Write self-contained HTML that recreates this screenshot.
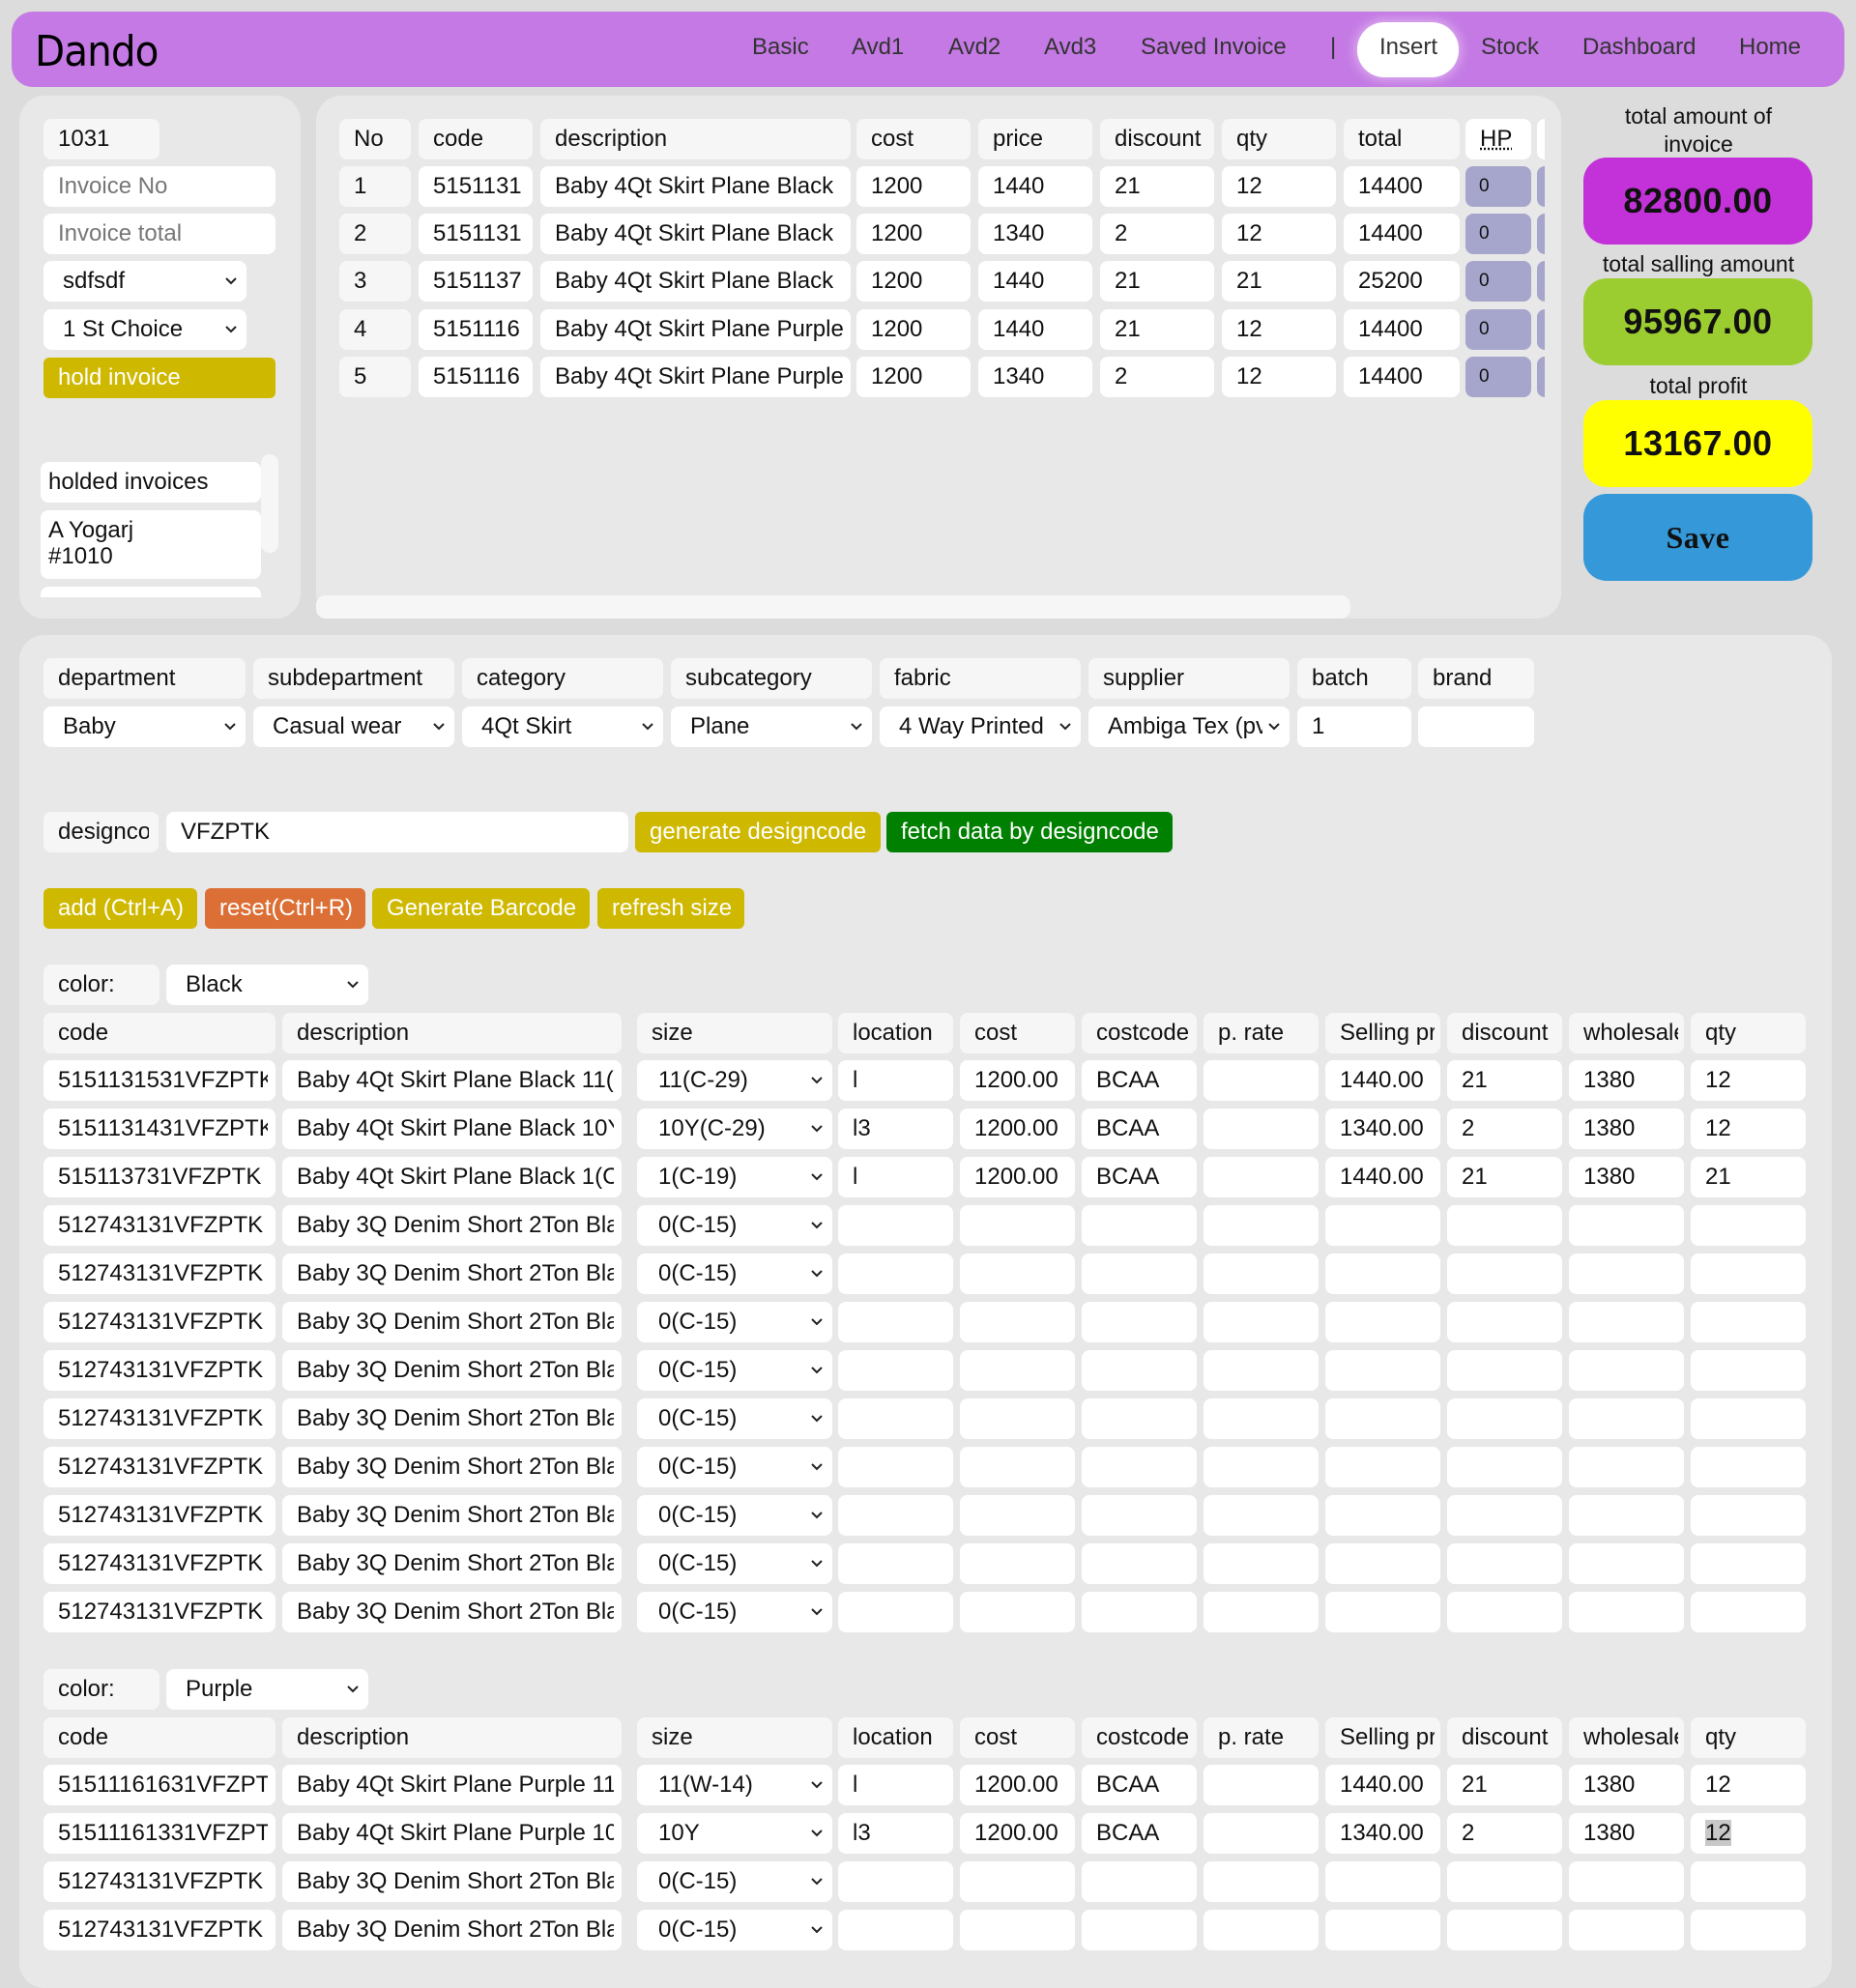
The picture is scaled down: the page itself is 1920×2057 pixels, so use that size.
<!DOCTYPE html>
<html><head><meta charset="utf-8"><style>
*{box-sizing:border-box;margin:0;padding:0}
body{width:1920px;height:2014px;background:#dcdcdc;font-family:"Liberation Sans",Arial,sans-serif;color:#111;position:relative;overflow:hidden;font-size:24px}
.a{position:absolute}
.c{position:absolute;height:42px;line-height:42px;border-radius:8px;background:#fff;padding-left:15px;white-space:nowrap;overflow:hidden;font-size:24px}
.h{background:#f6f6f6}
.sel svg{position:absolute;right:10px;top:17px}
.sel{padding-right:28px}
.btn{position:absolute;height:42px;line-height:42px;border-radius:6px;color:#fff;padding-left:15px;white-space:nowrap;font-size:24px}
.y{background:#cfb800}
.nav{position:absolute;top:35px;font-size:24px;color:#333}
.box{position:absolute;left:1638px;width:237px;height:90px;border-radius:24px;text-align:center;line-height:90px;font-weight:bold;font-size:36px;letter-spacing:0.5px}
.lab{position:absolute;left:1620px;width:274px;text-align:center;font-size:23px;line-height:29px}
.r{position:absolute;left:0;width:1920px;height:42px}
.k1{left:45px;width:240px}.k2{left:292px;width:351px}.k3{left:659px;width:202px}.k4{left:867px;width:119px}
.k5{left:993px;width:119px}.k6{left:1119px;width:119px}.k7{left:1245px;width:119px}.k8{left:1371px;width:119px}
.k9{left:1497px;width:119px}.k10{left:1623px;width:119px}.k11{left:1749px;width:119px}
.k3{padding-left:22px}
.t{display:block;overflow:hidden}
</style></head><body>
<!-- header -->
<div class="a" style="left:12px;top:12px;width:1896px;height:78px;background:#c479e4;border-radius:22px"></div>
<div class="a" style="left:36px;top:28px;font-size:44px;font-family:'DejaVu Sans',sans-serif;font-weight:normal;letter-spacing:-1px;color:#000;transform:scaleX(0.92);transform-origin:left">Dando</div>
<div class="nav" style="left:778px">Basic</div>
<div class="nav" style="left:881px">Avd1</div>
<div class="nav" style="left:981px">Avd2</div>
<div class="nav" style="left:1080px">Avd3</div>
<div class="nav" style="left:1180px">Saved Invoice</div>
<div class="nav" style="left:1376px">|</div>
<div class="a" style="left:1404px;top:23px;width:105px;height:57px;border-radius:28px;background:#fff;box-shadow:0 0 14px rgba(255,255,255,.6)"></div>
<div class="nav" style="left:1427px">Insert</div>
<div class="nav" style="left:1532px">Stock</div>
<div class="nav" style="left:1637px">Dashboard</div>
<div class="nav" style="left:1799px">Home</div>

<!-- left panel -->
<div class="a" style="left:20px;top:99px;width:291px;height:541px;background:#e8e8e8;border-radius:26px"></div>
<div class="c h" style="left:45px;top:123px;width:120px">1031</div>
<div class="c" style="left:45px;top:172px;width:240px;color:#777">Invoice No</div>
<div class="c" style="left:45px;top:221px;width:240px;color:#777">Invoice total</div>
<div class="c sel" style="left:45px;top:270px;width:210px;padding-left:20px">sdfsdf<svg width="12" height="8"><path d="M1 1l5 5 5-5" stroke="#222" stroke-width="2" fill="none"/></svg></div>
<div class="c sel" style="left:45px;top:320px;width:210px;padding-left:20px">1 St Choice<svg width="12" height="8"><path d="M1 1l5 5 5-5" stroke="#222" stroke-width="2" fill="none"/></svg></div>
<div class="btn y" style="left:45px;top:370px;width:240px">hold invoice</div>
<div class="c" style="left:42px;top:478px;width:228px;padding-left:8px">holded invoices</div>
<div class="c" style="left:42px;top:528px;width:228px;height:71px;line-height:27px;padding:7px 8px;white-space:normal">A Yogarj<br>#1010</div>
<div class="a" style="left:42px;top:607px;width:228px;height:11px;background:#fff;border-radius:8px 8px 0 0"></div>
<div class="a" style="left:270px;top:470px;width:18px;height:102px;background:#f6f6f6;border-radius:9px"></div>

<!-- middle panel -->
<div class="a" style="left:327px;top:99px;width:1288px;height:541px;background:#e8e8e8;border-radius:26px"></div>
<div class="a" style="left:327px;top:616px;width:1070px;height:24px;background:#f6f6f6;border-radius:10px"></div>
<div class="r" style="top:123px">
<div class="c h" style="left:351px;width:74px">No</div><div class="c h" style="left:433px;width:118px">code</div><div class="c h" style="left:559px;width:321px">description</div><div class="c h" style="left:886px;width:118px">cost</div><div class="c h" style="left:1012px;width:118px">price</div><div class="c h" style="left:1138px;width:118px">discount</div><div class="c h" style="left:1264px;width:118px">qty</div><div class="c h" style="left:1390px;width:120px">total</div><div class="c" style="left:1516px;width:68px;text-decoration:underline dotted">HP</div><div class="c" style="left:1590px;width:8px;padding:0;border-radius:8px 0 0 8px"></div>
</div>
<div class="r" style="top:172px"><div class="c h" style="left:351px;width:74px">1</div><div class="c" style="left:433px;width:118px">5151131</div><div class="c" style="left:559px;width:321px">Baby 4Qt Skirt Plane Black</div><div class="c" style="left:886px;width:118px">1200</div><div class="c" style="left:1012px;width:118px">1440</div><div class="c" style="left:1138px;width:118px">21</div><div class="c" style="left:1264px;width:118px">12</div><div class="c" style="left:1390px;width:120px">14400</div><div class="c" style="left:1516px;width:68px;background:#a6a6cc;font-size:19px;padding-left:14px">0</div><div class="c" style="left:1590px;width:8px;padding:0;background:#a6a6cc;border-radius:8px 0 0 8px"></div></div>
<div class="r" style="top:221px"><div class="c h" style="left:351px;width:74px">2</div><div class="c" style="left:433px;width:118px">5151131</div><div class="c" style="left:559px;width:321px">Baby 4Qt Skirt Plane Black</div><div class="c" style="left:886px;width:118px">1200</div><div class="c" style="left:1012px;width:118px">1340</div><div class="c" style="left:1138px;width:118px">2</div><div class="c" style="left:1264px;width:118px">12</div><div class="c" style="left:1390px;width:120px">14400</div><div class="c" style="left:1516px;width:68px;background:#a6a6cc;font-size:19px;padding-left:14px">0</div><div class="c" style="left:1590px;width:8px;padding:0;background:#a6a6cc;border-radius:8px 0 0 8px"></div></div>
<div class="r" style="top:270px"><div class="c h" style="left:351px;width:74px">3</div><div class="c" style="left:433px;width:118px">5151137</div><div class="c" style="left:559px;width:321px">Baby 4Qt Skirt Plane Black</div><div class="c" style="left:886px;width:118px">1200</div><div class="c" style="left:1012px;width:118px">1440</div><div class="c" style="left:1138px;width:118px">21</div><div class="c" style="left:1264px;width:118px">21</div><div class="c" style="left:1390px;width:120px">25200</div><div class="c" style="left:1516px;width:68px;background:#a6a6cc;font-size:19px;padding-left:14px">0</div><div class="c" style="left:1590px;width:8px;padding:0;background:#a6a6cc;border-radius:8px 0 0 8px"></div></div>
<div class="r" style="top:320px"><div class="c h" style="left:351px;width:74px">4</div><div class="c" style="left:433px;width:118px">5151116</div><div class="c" style="left:559px;width:321px">Baby 4Qt Skirt Plane Purple</div><div class="c" style="left:886px;width:118px">1200</div><div class="c" style="left:1012px;width:118px">1440</div><div class="c" style="left:1138px;width:118px">21</div><div class="c" style="left:1264px;width:118px">12</div><div class="c" style="left:1390px;width:120px">14400</div><div class="c" style="left:1516px;width:68px;background:#a6a6cc;font-size:19px;padding-left:14px">0</div><div class="c" style="left:1590px;width:8px;padding:0;background:#a6a6cc;border-radius:8px 0 0 8px"></div></div>
<div class="r" style="top:369px"><div class="c h" style="left:351px;width:74px">5</div><div class="c" style="left:433px;width:118px">5151116</div><div class="c" style="left:559px;width:321px">Baby 4Qt Skirt Plane Purple</div><div class="c" style="left:886px;width:118px">1200</div><div class="c" style="left:1012px;width:118px">1340</div><div class="c" style="left:1138px;width:118px">2</div><div class="c" style="left:1264px;width:118px">12</div><div class="c" style="left:1390px;width:120px">14400</div><div class="c" style="left:1516px;width:68px;background:#a6a6cc;font-size:19px;padding-left:14px">0</div><div class="c" style="left:1590px;width:8px;padding:0;background:#a6a6cc;border-radius:8px 0 0 8px"></div></div>

<!-- right -->
<div class="lab" style="top:106px">total amount of<br>invoice</div>
<div class="box" style="top:163px;background:#c332d9">82800.00</div>
<div class="lab" style="top:259px">total salling amount</div>
<div class="box" style="top:288px;background:#9ccd30">95967.00</div>
<div class="lab" style="top:385px">total profit</div>
<div class="box" style="top:414px;background:#ffff00">13167.00</div>
<div class="box" style="top:511px;background:#3498d9;font-family:'Liberation Serif',serif;font-size:32px">Save</div>

<!-- bottom panel -->
<div class="a" style="left:20px;top:657px;width:1875px;height:1400px;background:#e8e8e8;border-radius:26px"></div>
<div class="c h" style="left:45px;top:681px;width:209px">department</div>
<div class="c h" style="left:262px;top:681px;width:208px">subdepartment</div>
<div class="c h" style="left:478px;top:681px;width:208px">category</div>
<div class="c h" style="left:694px;top:681px;width:208px">subcategory</div>
<div class="c h" style="left:910px;top:681px;width:208px">fabric</div>
<div class="c h" style="left:1126px;top:681px;width:208px">supplier</div>
<div class="c h" style="left:1342px;top:681px;width:118px">batch</div>
<div class="c h" style="left:1467px;top:681px;width:120px">brand</div>
<div class="c sel" style="left:45px;top:731px;width:209px;padding-left:20px">Baby<svg width="12" height="8"><path d="M1 1l5 5 5-5" stroke="#222" stroke-width="2" fill="none"/></svg></div>
<div class="c sel" style="left:262px;top:731px;width:208px;padding-left:20px">Casual wear<svg width="12" height="8"><path d="M1 1l5 5 5-5" stroke="#222" stroke-width="2" fill="none"/></svg></div>
<div class="c sel" style="left:478px;top:731px;width:208px;padding-left:20px">4Qt Skirt<svg width="12" height="8"><path d="M1 1l5 5 5-5" stroke="#222" stroke-width="2" fill="none"/></svg></div>
<div class="c sel" style="left:694px;top:731px;width:208px;padding-left:20px">Plane<svg width="12" height="8"><path d="M1 1l5 5 5-5" stroke="#222" stroke-width="2" fill="none"/></svg></div>
<div class="c sel" style="left:910px;top:731px;width:208px;padding-left:20px"><span class="t">4 Way Printed</span><svg width="12" height="8"><path d="M1 1l5 5 5-5" stroke="#222" stroke-width="2" fill="none"/></svg></div>
<div class="c sel" style="left:1126px;top:731px;width:208px;padding-left:20px"><span class="t">Ambiga Tex (pvt)</span><svg width="12" height="8"><path d="M1 1l5 5 5-5" stroke="#222" stroke-width="2" fill="none"/></svg></div>
<div class="c" style="left:1342px;top:731px;width:118px">1</div>
<div class="c" style="left:1467px;top:731px;width:120px"></div>

<div class="c h" style="left:45px;top:840px;width:119px;padding-right:10px"><span class="t">designcode</span></div>
<div class="c" style="left:172px;top:840px;width:478px">VFZPTK</div>
<div class="btn y" style="left:657px;top:840px;width:254px">generate designcode</div>
<div class="btn" style="left:917px;top:840px;width:296px;background:#008000">fetch data by designcode</div>

<div class="btn y" style="left:45px;top:919px;width:159px">add (Ctrl+A)</div>
<div class="btn" style="left:212px;top:919px;width:166px;background:#dc6f35">reset(Ctrl+R)</div>
<div class="btn y" style="left:385px;top:919px;width:225px">Generate Barcode</div>
<div class="btn y" style="left:618px;top:919px;width:152px">refresh size</div>

<div class="c h" style="left:45px;top:998px;width:120px">color:</div>
<div class="c sel" style="left:172px;top:998px;width:209px;padding-left:20px">Black<svg width="12" height="8"><path d="M1 1l5 5 5-5" stroke="#222" stroke-width="2" fill="none"/></svg></div>

<div class="r" style="top:1048px"><div class="c h k1">code</div><div class="c h k2">description</div><div class="c h k3" style="padding-left:15px">size</div><div class="c h k4">location</div><div class="c h k5">cost</div><div class="c h k6" style="padding-right:6px"><span class="t">costcode</span></div><div class="c h k7">p. rate</div><div class="c h k8" style="padding-right:6px"><span class="t">Selling price</span></div><div class="c h k9">discount</div><div class="c h k10" style="padding-right:6px"><span class="t">wholesale</span></div><div class="c h k11">qty</div></div>

<div class="r" style="top:1097px"><div class="c k1" style="padding-right:8px"><span class="t">5151131531VFZPTK</span></div><div class="c k2" style="padding-right:8px"><span class="t">Baby 4Qt Skirt Plane Black 11(C-29)</span></div><div class="c sel k3">11(C-29)<svg width="12" height="8"><path d="M1 1l5 5 5-5" stroke="#222" stroke-width="2" fill="none"/></svg></div><div class="c k4">l</div><div class="c k5">1200.00</div><div class="c k6">BCAA</div><div class="c k7"></div><div class="c k8">1440.00</div><div class="c k9">21</div><div class="c k10">1380</div><div class="c k11">12</div></div>
<div class="r" style="top:1147px"><div class="c k1" style="padding-right:8px"><span class="t">5151131431VFZPTK</span></div><div class="c k2" style="padding-right:8px"><span class="t">Baby 4Qt Skirt Plane Black 10Y(C-29)</span></div><div class="c sel k3">10Y(C-29)<svg width="12" height="8"><path d="M1 1l5 5 5-5" stroke="#222" stroke-width="2" fill="none"/></svg></div><div class="c k4">l3</div><div class="c k5">1200.00</div><div class="c k6">BCAA</div><div class="c k7"></div><div class="c k8">1340.00</div><div class="c k9">2</div><div class="c k10">1380</div><div class="c k11">12</div></div>
<div class="r" style="top:1197px"><div class="c k1" style="padding-right:8px"><span class="t">515113731VFZPTK</span></div><div class="c k2" style="padding-right:8px"><span class="t">Baby 4Qt Skirt Plane Black 1(C-19)</span></div><div class="c sel k3">1(C-19)<svg width="12" height="8"><path d="M1 1l5 5 5-5" stroke="#222" stroke-width="2" fill="none"/></svg></div><div class="c k4">l</div><div class="c k5">1200.00</div><div class="c k6">BCAA</div><div class="c k7"></div><div class="c k8">1440.00</div><div class="c k9">21</div><div class="c k10">1380</div><div class="c k11">21</div></div>
<div class="r" style="top:1247px"><div class="c k1">512743131VFZPTK</div><div class="c k2" style="padding-right:8px"><span class="t">Baby 3Q Denim Short 2Ton Black</span></div><div class="c sel k3">0(C-15)<svg width="12" height="8"><path d="M1 1l5 5 5-5" stroke="#222" stroke-width="2" fill="none"/></svg></div><div class="c k4"></div><div class="c k5"></div><div class="c k6"></div><div class="c k7"></div><div class="c k8"></div><div class="c k9"></div><div class="c k10"></div><div class="c k11"></div></div>
<div class="r" style="top:1297px"><div class="c k1">512743131VFZPTK</div><div class="c k2" style="padding-right:8px"><span class="t">Baby 3Q Denim Short 2Ton Black</span></div><div class="c sel k3">0(C-15)<svg width="12" height="8"><path d="M1 1l5 5 5-5" stroke="#222" stroke-width="2" fill="none"/></svg></div><div class="c k4"></div><div class="c k5"></div><div class="c k6"></div><div class="c k7"></div><div class="c k8"></div><div class="c k9"></div><div class="c k10"></div><div class="c k11"></div></div>
<div class="r" style="top:1347px"><div class="c k1">512743131VFZPTK</div><div class="c k2" style="padding-right:8px"><span class="t">Baby 3Q Denim Short 2Ton Black</span></div><div class="c sel k3">0(C-15)<svg width="12" height="8"><path d="M1 1l5 5 5-5" stroke="#222" stroke-width="2" fill="none"/></svg></div><div class="c k4"></div><div class="c k5"></div><div class="c k6"></div><div class="c k7"></div><div class="c k8"></div><div class="c k9"></div><div class="c k10"></div><div class="c k11"></div></div>
<div class="r" style="top:1397px"><div class="c k1">512743131VFZPTK</div><div class="c k2" style="padding-right:8px"><span class="t">Baby 3Q Denim Short 2Ton Black</span></div><div class="c sel k3">0(C-15)<svg width="12" height="8"><path d="M1 1l5 5 5-5" stroke="#222" stroke-width="2" fill="none"/></svg></div><div class="c k4"></div><div class="c k5"></div><div class="c k6"></div><div class="c k7"></div><div class="c k8"></div><div class="c k9"></div><div class="c k10"></div><div class="c k11"></div></div>
<div class="r" style="top:1447px"><div class="c k1">512743131VFZPTK</div><div class="c k2" style="padding-right:8px"><span class="t">Baby 3Q Denim Short 2Ton Black</span></div><div class="c sel k3">0(C-15)<svg width="12" height="8"><path d="M1 1l5 5 5-5" stroke="#222" stroke-width="2" fill="none"/></svg></div><div class="c k4"></div><div class="c k5"></div><div class="c k6"></div><div class="c k7"></div><div class="c k8"></div><div class="c k9"></div><div class="c k10"></div><div class="c k11"></div></div>
<div class="r" style="top:1497px"><div class="c k1">512743131VFZPTK</div><div class="c k2" style="padding-right:8px"><span class="t">Baby 3Q Denim Short 2Ton Black</span></div><div class="c sel k3">0(C-15)<svg width="12" height="8"><path d="M1 1l5 5 5-5" stroke="#222" stroke-width="2" fill="none"/></svg></div><div class="c k4"></div><div class="c k5"></div><div class="c k6"></div><div class="c k7"></div><div class="c k8"></div><div class="c k9"></div><div class="c k10"></div><div class="c k11"></div></div>
<div class="r" style="top:1547px"><div class="c k1">512743131VFZPTK</div><div class="c k2" style="padding-right:8px"><span class="t">Baby 3Q Denim Short 2Ton Black</span></div><div class="c sel k3">0(C-15)<svg width="12" height="8"><path d="M1 1l5 5 5-5" stroke="#222" stroke-width="2" fill="none"/></svg></div><div class="c k4"></div><div class="c k5"></div><div class="c k6"></div><div class="c k7"></div><div class="c k8"></div><div class="c k9"></div><div class="c k10"></div><div class="c k11"></div></div>
<div class="r" style="top:1597px"><div class="c k1">512743131VFZPTK</div><div class="c k2" style="padding-right:8px"><span class="t">Baby 3Q Denim Short 2Ton Black</span></div><div class="c sel k3">0(C-15)<svg width="12" height="8"><path d="M1 1l5 5 5-5" stroke="#222" stroke-width="2" fill="none"/></svg></div><div class="c k4"></div><div class="c k5"></div><div class="c k6"></div><div class="c k7"></div><div class="c k8"></div><div class="c k9"></div><div class="c k10"></div><div class="c k11"></div></div>
<div class="r" style="top:1647px"><div class="c k1">512743131VFZPTK</div><div class="c k2" style="padding-right:8px"><span class="t">Baby 3Q Denim Short 2Ton Black</span></div><div class="c sel k3">0(C-15)<svg width="12" height="8"><path d="M1 1l5 5 5-5" stroke="#222" stroke-width="2" fill="none"/></svg></div><div class="c k4"></div><div class="c k5"></div><div class="c k6"></div><div class="c k7"></div><div class="c k8"></div><div class="c k9"></div><div class="c k10"></div><div class="c k11"></div></div>

<div class="c h" style="left:45px;top:1727px;width:120px">color:</div>
<div class="c sel" style="left:172px;top:1727px;width:209px;padding-left:20px">Purple<svg width="12" height="8"><path d="M1 1l5 5 5-5" stroke="#222" stroke-width="2" fill="none"/></svg></div>

<div class="r" style="top:1777px"><div class="c h k1">code</div><div class="c h k2">description</div><div class="c h k3" style="padding-left:15px">size</div><div class="c h k4">location</div><div class="c h k5">cost</div><div class="c h k6" style="padding-right:6px"><span class="t">costcode</span></div><div class="c h k7">p. rate</div><div class="c h k8" style="padding-right:6px"><span class="t">Selling price</span></div><div class="c h k9">discount</div><div class="c h k10" style="padding-right:6px"><span class="t">wholesale</span></div><div class="c h k11">qty</div></div>
<div class="r" style="top:1826px"><div class="c k1" style="padding-right:8px"><span class="t">51511161631VFZPTK</span></div><div class="c k2" style="padding-right:8px"><span class="t">Baby 4Qt Skirt Plane Purple 11(W-14)</span></div><div class="c sel k3">11(W-14)<svg width="12" height="8"><path d="M1 1l5 5 5-5" stroke="#222" stroke-width="2" fill="none"/></svg></div><div class="c k4">l</div><div class="c k5">1200.00</div><div class="c k6">BCAA</div><div class="c k7"></div><div class="c k8">1440.00</div><div class="c k9">21</div><div class="c k10">1380</div><div class="c k11">12</div></div>
<div class="r" style="top:1876px"><div class="c k1" style="padding-right:8px"><span class="t">51511161331VFZPTK</span></div><div class="c k2" style="padding-right:8px"><span class="t">Baby 4Qt Skirt Plane Purple 10Y</span></div><div class="c sel k3">10Y<svg width="12" height="8"><path d="M1 1l5 5 5-5" stroke="#222" stroke-width="2" fill="none"/></svg></div><div class="c k4">l3</div><div class="c k5">1200.00</div><div class="c k6">BCAA</div><div class="c k7"></div><div class="c k8">1340.00</div><div class="c k9">2</div><div class="c k10">1380</div><div class="c k11"><span style="background:#c8c8c8">12</span></div></div>
<div class="r" style="top:1926px"><div class="c k1">512743131VFZPTK</div><div class="c k2" style="padding-right:8px"><span class="t">Baby 3Q Denim Short 2Ton Black</span></div><div class="c sel k3">0(C-15)<svg width="12" height="8"><path d="M1 1l5 5 5-5" stroke="#222" stroke-width="2" fill="none"/></svg></div><div class="c k4"></div><div class="c k5"></div><div class="c k6"></div><div class="c k7"></div><div class="c k8"></div><div class="c k9"></div><div class="c k10"></div><div class="c k11"></div></div>
<div class="r" style="top:1976px"><div class="c k1">512743131VFZPTK</div><div class="c k2" style="padding-right:8px"><span class="t">Baby 3Q Denim Short 2Ton Black</span></div><div class="c sel k3">0(C-15)<svg width="12" height="8"><path d="M1 1l5 5 5-5" stroke="#222" stroke-width="2" fill="none"/></svg></div><div class="c k4"></div><div class="c k5"></div><div class="c k6"></div><div class="c k7"></div><div class="c k8"></div><div class="c k9"></div><div class="c k10"></div><div class="c k11"></div></div>
</body></html>
